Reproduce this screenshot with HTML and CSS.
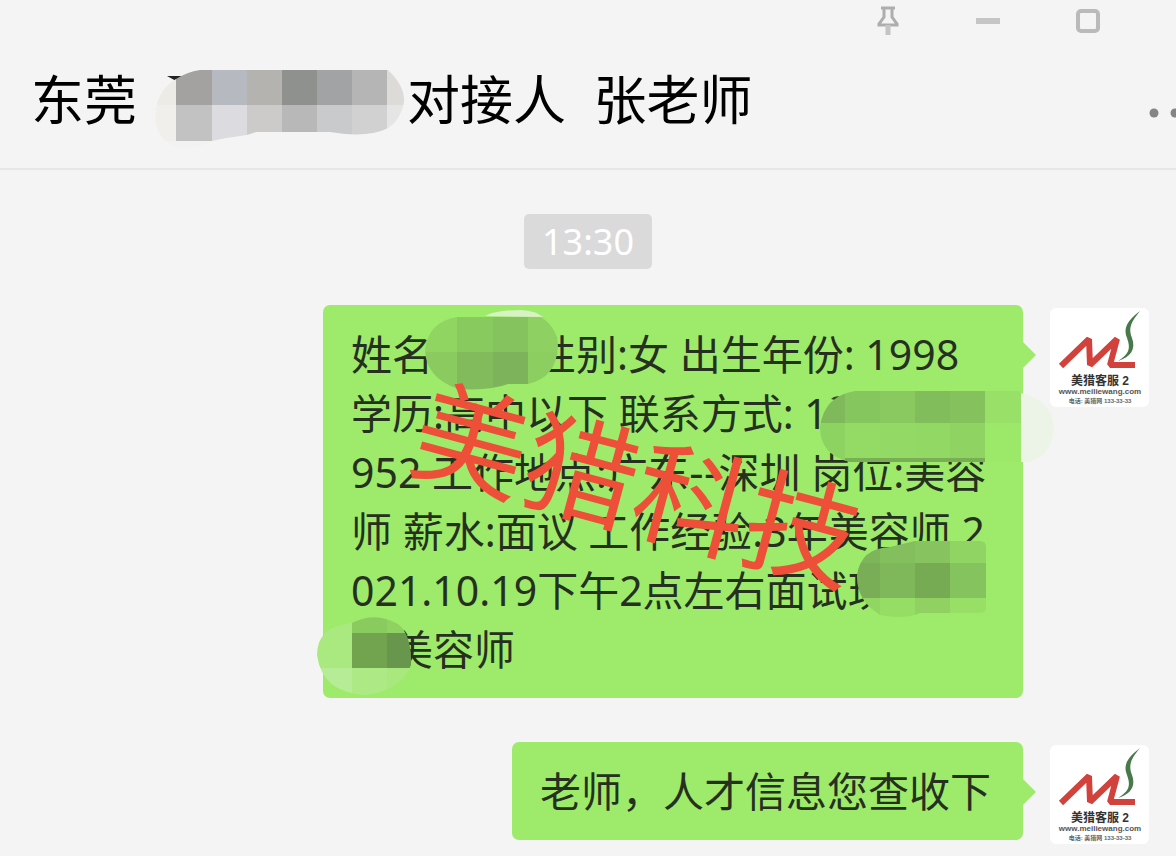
FILE: index.html
```html
<!DOCTYPE html>
<html lang="zh-CN">
<head>
<meta charset="utf-8">
<meta name="viewport" content="width=device-width, initial-scale=1">
<title>东莞 对接人 张老师</title>
<link rel="stylesheet" href="styles.css">
</head>
<body>
<header class="header">
  <div class="controls">
    <button class="control" aria-label="置顶">
      <svg width="26" height="32" viewBox="0 0 26 32"><path d="M6 4H20M9 4V13L4 20V21H22V20L17 13V4" fill="none" stroke="#adadad" stroke-width="3"/><path d="M13 21V31" stroke="#c4c4c4" stroke-width="5"/></svg>
    </button>
    <button class="control" aria-label="最小化">
      <svg width="26" height="32" viewBox="0 0 26 32"><path d="M1 17H25" stroke="#c5c5c5" stroke-width="6"/></svg>
    </button>
    <button class="control" aria-label="最大化">
      <svg width="26" height="32" viewBox="0 0 26 32"><rect x="3" y="7" width="20" height="20" rx="3" fill="none" stroke="#bababa" stroke-width="4"/></svg>
    </button>
  </div>
  <div class="title-row">
    <h1 class="title">东莞<span class="gap gap-company"></span>对接人&nbsp; 张老师</h1>
    <button class="more" aria-label="更多">
      <svg width="52" height="12" viewBox="0 0 52 12" fill="#858585"><circle cx="6" cy="6" r="4.500"/><circle cx="27" cy="6" r="4.500"/><circle cx="47" cy="6" r="4.500"/></svg>
    </button>
  </div>
  <svg class="mosaic mosaic-company" width="260" height="90" viewBox="150 65 260 90" aria-hidden="true">
    <clipPath id="c1"><path d="M176 79Q187 72 200 70H388Q405 86 404 102Q400 122 386 129Q372 136 345 134L330 132H256L247 135Q230 137 212 141Q190 153 170 145Q152 132 156 108Q160 88 176 79Z"/></clipPath>
    <path d="M167 76H185L178 82Z" fill="#222"/>
    <g clip-path="url(#c1)">
      <path d="M150 65H176V105H150Z" fill="#edebe6"/><path d="M150 105H176V141H150Z" fill="#f0efec"/>
      <path d="M150 141H260V155H150Z" fill="#f2f2f2"/>
      <path d="M176 65H212V105H176Z" fill="#a3a2a0"/><path d="M176 105H212V141H176Z" fill="#c2c2c2"/>
      <path d="M212 65H247V105H212Z" fill="#b7b9c0"/><path d="M212 105H247V141H212Z" fill="#dcdbdf"/>
      <path d="M247 65H282V105H247Z" fill="#b4b3b0"/><path d="M247 105H282V141H247Z" fill="#cccbc9"/>
      <path d="M282 65H317V105H282Z" fill="#8f918e"/><path d="M282 105H317V141H282Z" fill="#b8b8b8"/>
      <path d="M317 65H352V105H317Z" fill="#a1a3a5"/><path d="M317 105H352V141H317Z" fill="#c8cacc"/>
      <path d="M352 65H387V105H352Z" fill="#b5b5b5"/><path d="M352 105H387V141H352Z" fill="#d1d1d1"/>
      <path d="M387 65H410V105H387Z" fill="#dcdbd8"/><path d="M387 105H410V141H387Z" fill="#e5e5e5"/>
    </g>
  </svg>
</header>

<main class="chat">
  <time class="time">13:30</time>

  <article class="message">
    <div class="bubble bubble-long">
      <span class="line">姓名<span class="gap gap-name"></span>性别:女 出生年份: 1998</span>
      <span class="line">学历:高中以下 联系方式: 1</span>
      <span class="line">952 工作地点:广东<span class="dashes">--</span>深圳 岗位:美容</span>
      <span class="line">师 薪水:面议 工作经验:3年美容师 2</span>
      <span class="line">021.10.19下午2点左右面试现</span>
      <span class="line"><span class="gap gap-place"></span>美容师</span>
      <svg class="mosaic mosaic-message" width="760" height="400" viewBox="310 300 760 400" aria-hidden="true">
        <clipPath id="c2"><path d="M457 317H541Q558 328 558 347Q556 378 528 384H508Q490 391 458 389Q426 378 425 350Q428 322 457 317Z"/></clipPath>
        <clipPath id="c3"><path d="M855 391H1020V393Q1054 400 1054 430Q1050 458 1028 462H850Q820 455 820 427Q824 396 855 391Z"/></clipPath>
        <clipPath id="c4"><path d="M915 541H980Q986 541 986 547V607Q986 613 980 613H920Q905 620 880 615Q856 600 857 575Q861 548 890 547Z"/></clipPath>
        <clipPath id="c5"><path d="M317 655Q317 626 352 623Q375 611 398 624Q412 635 411 665Q402 690 366 695Q322 693 317 655Z"/></clipPath>
        <path d="M485 316Q497 310 521 310Q536 311 543 317Z" fill="#d8f1c5"/>
        <path d="M831 399Q835 395 841 397L835 400Z" fill="#34452c"/>
        <g clip-path="url(#c2)">
          <path d="M420 310H457V352H420Z" fill="#90d462"/><path d="M420 352H457V395H420Z" fill="#8bca5f"/>
          <path d="M457 310H493V352H457Z" fill="#89ca5f"/><path d="M457 352H493V395H457Z" fill="#82bb5c"/>
          <path d="M493 310H528V352H493Z" fill="#84c35d"/><path d="M493 352H528V395H493Z" fill="#7db45b"/>
          <path d="M528 310H565V352H528Z" fill="#8ed162"/><path d="M528 352H565V395H528Z" fill="#8dce61"/>
        </g>
        <g clip-path="url(#c3)">
          <path d="M815 385H845V423H815Z" fill="#80b95b"/><path d="M815 423H845V470H815Z" fill="#8dd362"/>
          <path d="M845 385H880V423H845Z" fill="#86c65e"/><path d="M845 423H880V470H845Z" fill="#94db66"/>
          <path d="M880 385H915V423H880Z" fill="#89c960"/><path d="M880 423H915V470H880Z" fill="#93d965"/>
          <path d="M915 385H950V423H915Z" fill="#82bd5c"/><path d="M915 423H950V470H915Z" fill="#91d864"/>
          <path d="M950 385H985V423H950Z" fill="#85c15d"/><path d="M950 423H985V470H950Z" fill="#8fd462"/>
          <path d="M985 385H1021V423H985Z" fill="#98e068"/><path d="M985 423H1021V470H985Z" fill="#9ce96a"/>
          <path d="M1021 385H1060V470H1021Z" fill="#ecf4e7"/>
          <path d="M845 458H985V462H845Z" fill="#78ae54"/>
        </g>
        <g clip-path="url(#c4)">
          <path d="M850 540H880V563H850Z" fill="#7db55a"/><path d="M850 563H880V598H850Z" fill="#79ad56"/><path d="M850 598H880V620H850Z" fill="#91d662"/>
          <path d="M880 540H915V563H880Z" fill="#83bf5c"/><path d="M880 563H915V598H880Z" fill="#7fb85a"/><path d="M880 598H915V620H880Z" fill="#95dd65"/>
          <path d="M915 540H950V563H915Z" fill="#87c45f"/><path d="M915 563H950V598H915Z" fill="#76aa53"/><path d="M915 598H950V620H915Z" fill="#90d161"/>
          <path d="M950 540H986V563H950Z" fill="#90d463"/><path d="M950 563H986V598H950Z" fill="#84c35d"/><path d="M950 598H986V620H950Z" fill="#98df66"/>
        </g>
        <g clip-path="url(#c5)">
          <path d="M310 610H352V668H310Z" fill="#aae97f"/><path d="M310 668H352V700H310Z" fill="#b7ec96"/>
          <path d="M352 610H387V633H352Z" fill="#8acb5f"/><path d="M352 633H387V668H352Z" fill="#72a44f"/><path d="M352 668H387V700H352Z" fill="#adea85"/>
          <path d="M387 610H415V633H387Z" fill="#8fd262"/><path d="M387 633H415V668H387Z" fill="#68964d"/><path d="M387 668H415V700H387Z" fill="#a8e87c"/>
        </g>
      </svg>
      <span class="watermark">美猎科技</span>
    </div>
    <svg class="avatar" viewBox="0 0 99 99" role="img" aria-label="美猎客服 2">
      <path d="M11 58 39 31 40 57 67 31 60 57H85" fill="none" stroke="#d2423d" stroke-width="6" stroke-linejoin="bevel"/>
      <path d="M90 3C77 13 73 20 77 30C81 41 79 46 68 53C81 49 86 41 82 30C78 20 81 14 90 3Z" fill="#48794a"/>
      <text x="50" y="77" class="logo-name">美猎客服 2</text>
      <text x="50" y="86" class="logo-site">www.meiliewang.com</text>
      <text x="50" y="95" class="logo-tel">电话: 美猎网 133-33-33</text>
    </svg>
  </article>

  <article class="message">
    <div class="bubble"><span class="line">老师，人才信息您查收下</span></div>
    <svg class="avatar" viewBox="0 0 99 99" role="img" aria-label="美猎客服 2">
      <path d="M11 58 39 31 40 57 67 31 60 57H85" fill="none" stroke="#d2423d" stroke-width="6" stroke-linejoin="bevel"/>
      <path d="M90 3C77 13 73 20 77 30C81 41 79 46 68 53C81 49 86 41 82 30C78 20 81 14 90 3Z" fill="#48794a"/>
      <text x="50" y="77" class="logo-name">美猎客服 2</text>
      <text x="50" y="86" class="logo-site">www.meiliewang.com</text>
      <text x="50" y="95" class="logo-tel">电话: 美猎网 133-33-33</text>
    </svg>
  </article>
</main>
</body>
</html>
```
FILE: styles.css
```css
* { box-sizing: border-box; }

body {
  margin: 0;
  background: #f4f4f4;
  color: #26301f;
  font-family: "Noto Sans", "Noto Sans CJK SC", sans-serif;
  overflow-x: hidden;
}

button {
  border: 0;
  padding: 0;
  background: none;
  display: flex;
}

.header {
  position: relative;
  border-bottom: 2px solid #e6e6e6;
}

.controls {
  display: flex;
  justify-content: flex-end;
  gap: 74px;
  padding: 4px 75px 0 0;
}

.title-row {
  display: flex;
  align-items: center;
  justify-content: space-between;
  padding: 24px 0 28px 31px;
  overflow: hidden;
}

.title {
  margin: 0;
  color: #000;
  font-size: 53px;
  font-weight: 400;
  line-height: 80px;
  white-space: nowrap;
}

.more {
  margin: 26px -24px 0 0;
}

.gap { display: inline-block; }
.gap-company { width: 270px; }
.gap-name { width: 102px; }
.gap-place { width: 41px; }

.dashes {
  font-family: "DejaVu Sans", sans-serif;
  line-height: 1;
}

.mosaic {
  position: absolute;
  pointer-events: none;
}
.mosaic-company { left: 150px; top: 65px; }
.mosaic-message { left: -13px; top: -5px; }

.chat {
  display: flex;
  flex-direction: column;
  padding: 44px 27px 14px;
}

.time {
  align-self: center;
  margin-bottom: 36px;
  padding: 0 18px;
  border-radius: 5px;
  background: #dadada;
  color: #fff;
  font-size: 36px;
  line-height: 55px;
}

.message {
  display: flex;
  justify-content: flex-end;
  align-items: flex-start;
  gap: 27px;
}
.message + .message { margin-top: 44px; }

.bubble {
  position: relative;
  padding: 20px 32px 19px 28px;
  border-radius: 7px;
  background: #9eeb6b;
  font-size: 41px;
  line-height: 59px;
}
.bubble-long { flex: 0 1 700px; }

.bubble::after {
  content: "";
  position: absolute;
  left: 100%;
  top: 37px;
  border: 13px solid transparent;
  border-left-color: #9eeb6b;
  border-right: 0;
}

.line {
  display: block;
  white-space: nowrap;
}

.watermark {
  position: absolute;
  left: 86px;
  top: 94px;
  color: #ed4f38;
  font-size: 114px;
  line-height: 170px;
  white-space: nowrap;
  transform: rotate(15deg);
}

.avatar {
  flex: none;
  width: 99px;
  height: 99px;
  margin-top: 3px;
  border-radius: 6px;
  background: #fff;
}

.logo-name,
.logo-site,
.logo-tel {
  font-family: "Liberation Sans", "Noto Sans CJK SC", sans-serif;
  font-weight: 700;
  text-anchor: middle;
}
.logo-name { font-size: 12px; fill: #333; }
.logo-site { font-size: 8px; fill: #555; }
.logo-tel { font-size: 6px; fill: #666; }
```
